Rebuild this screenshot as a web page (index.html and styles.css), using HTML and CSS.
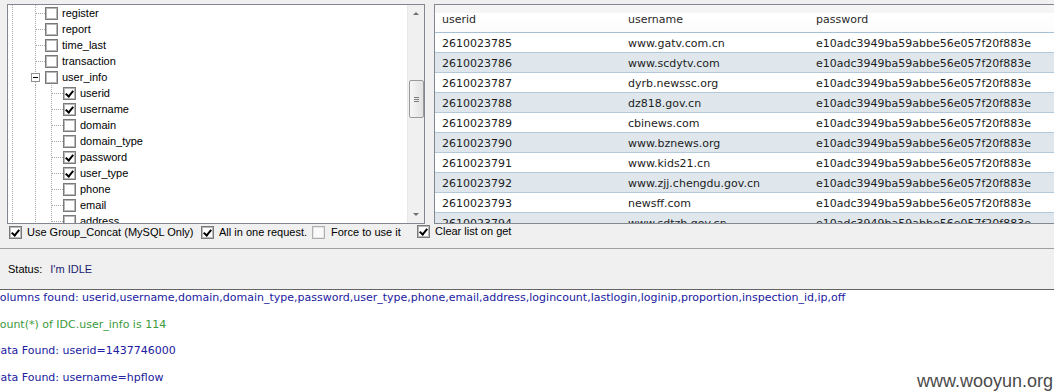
FILE: index.html
```html
<!DOCTYPE html>
<html lang="en">
<head>
    <meta charset="UTF-8">
    <title>Dump - user_info</title>
    <link rel="stylesheet" href="styles.css">
</head>
<body>
    <div class="top">
        <div class="tree">
            <div class="tree-body">
                <div class="node lvl2"><span class="cb"></span><span class="lbl">register</span></div>
                <div class="node lvl2"><span class="cb"></span><span class="lbl">report</span></div>
                <div class="node lvl2"><span class="cb"></span><span class="lbl">time_last</span></div>
                <div class="node lvl2"><span class="cb"></span><span class="lbl">transaction</span></div>
                <div class="node lvl1"><span class="toggle"></span><span class="cb"></span><span class="lbl">user_info</span></div>
                <div class="node lvl3"><span class="cb on"></span><span class="lbl">userid</span></div>
                <div class="node lvl3"><span class="cb on"></span><span class="lbl">username</span></div>
                <div class="node lvl3"><span class="cb"></span><span class="lbl">domain</span></div>
                <div class="node lvl3"><span class="cb"></span><span class="lbl">domain_type</span></div>
                <div class="node lvl3"><span class="cb on"></span><span class="lbl">password</span></div>
                <div class="node lvl3"><span class="cb on"></span><span class="lbl">user_type</span></div>
                <div class="node lvl3"><span class="cb"></span><span class="lbl">phone</span></div>
                <div class="node lvl3"><span class="cb"></span><span class="lbl">email</span></div>
                <div class="node lvl3"><span class="cb"></span><span class="lbl">address</span></div>
            </div>
            <div class="vscroll">
                <div class="arrow up"></div>
                <div class="thumb"><span></span><span></span><span></span></div>
                <div class="arrow down"></div>
            </div>
        </div>
        <div class="grid">
            <table>
                <thead>
                    <tr><th class="c1">userid</th><th class="c2">username</th><th>password</th></tr>
                </thead>
                <tbody>
                    <tr><td>2610023785</td><td>www.gatv.com.cn</td><td>e10adc3949ba59abbe56e057f20f883e</td></tr>
                    <tr><td>2610023786</td><td>www.scdytv.com</td><td>e10adc3949ba59abbe56e057f20f883e</td></tr>
                    <tr><td>2610023787</td><td>dyrb.newssc.org</td><td>e10adc3949ba59abbe56e057f20f883e</td></tr>
                    <tr><td>2610023788</td><td>dz818.gov.cn</td><td>e10adc3949ba59abbe56e057f20f883e</td></tr>
                    <tr><td>2610023789</td><td>cbinews.com</td><td>e10adc3949ba59abbe56e057f20f883e</td></tr>
                    <tr><td>2610023790</td><td>www.bznews.org</td><td>e10adc3949ba59abbe56e057f20f883e</td></tr>
                    <tr><td>2610023791</td><td>www.kids21.cn</td><td>e10adc3949ba59abbe56e057f20f883e</td></tr>
                    <tr><td>2610023792</td><td>www.zjj.chengdu.gov.cn</td><td>e10adc3949ba59abbe56e057f20f883e</td></tr>
                    <tr><td>2610023793</td><td>newsff.com</td><td>e10adc3949ba59abbe56e057f20f883e</td></tr>
                    <tr><td>2610023794</td><td>www.sdtzb.gov.cn</td><td>e10adc3949ba59abbe56e057f20f883e</td></tr>
                </tbody>
            </table>
        </div>
    </div>

    <div class="options">
        <label class="opt o1"><span class="cb on"></span>Use Group_Concat (MySQL Only)</label>
        <label class="opt o2"><span class="cb on"></span>All in one request.</label>
        <label class="opt o3"><span class="cb off"></span>Force to use it</label>
        <label class="opt o4"><span class="cb on"></span>Clear list on get</label>
    </div>

    <div class="status">Status: <span class="state">I'm IDLE</span></div>

    <div class="log">
        <p class="info">Columns found: userid,username,domain,domain_type,password,user_type,phone,email,address,logincount,lastlogin,loginip,proportion,inspection_id,ip,off</p>
        <p class="ok">Count(*) of IDC.user_info is 114</p>
        <p class="info">Data Found: userid=1437746000</p>
        <p class="info">Data Found: username=hpflow</p>
        <div class="mark">www.wooyun.org</div>
    </div>
</body>
</html>
```

FILE: styles.css
```css
body, html {
    margin: 0;
    padding: 0;
    height: 100%;
    overflow: hidden;
    background-color: #f0f0f0;
    font-family: 'Liberation Sans', Arial, sans-serif;
    font-size: 11px;
    color: #000;
}
.top {
    display: flex;
    padding: 4px 0 0 7px;
    height: 220px;
}

/* tree of tables / columns */
.tree {
    width: 416px;
    height: 218px;
    border: 1px solid #828790;
    background: #fff;
    display: flex;
    flex-shrink: 0;
}
.tree-body {
    flex: 1;
    overflow: hidden;
}
.node {
    height: 16px;
    display: flex;
    align-items: center;
    background-repeat: no-repeat;
}
.lvl1 {
    padding-left: 23px;
    background-image:
        repeating-linear-gradient(to bottom, #a8a8a8 0 1px, transparent 1px 2px),
        repeating-linear-gradient(to bottom, #a8a8a8 0 1px, transparent 1px 2px),
        repeating-linear-gradient(to bottom, #a8a8a8 0 1px, transparent 1px 2px);
    background-size: 1px 16px, 1px 4px, 1px 4px;
    background-position: 4px 0, 27px 0, 27px 13px;
}
.lvl2 {
    padding-left: 37px;
    background-image:
        repeating-linear-gradient(to bottom, #a8a8a8 0 1px, transparent 1px 2px),
        repeating-linear-gradient(to bottom, #a8a8a8 0 1px, transparent 1px 2px),
        repeating-linear-gradient(to right, #a8a8a8 0 1px, transparent 1px 2px);
    background-size: 1px 16px, 1px 16px, 9px 1px;
    background-position: 4px 0, 27px 0, 28px 8px;
}
.lvl3 {
    padding-left: 55px;
    background-image:
        repeating-linear-gradient(to bottom, #a8a8a8 0 1px, transparent 1px 2px),
        repeating-linear-gradient(to bottom, #a8a8a8 0 1px, transparent 1px 2px),
        repeating-linear-gradient(to bottom, #a8a8a8 0 1px, transparent 1px 2px),
        repeating-linear-gradient(to right, #a8a8a8 0 1px, transparent 1px 2px);
    background-size: 1px 16px, 1px 16px, 1px 16px, 11px 1px;
    background-position: 4px 0, 27px 0, 43px 0, 44px 8px;
}
.toggle {
    width: 7px;
    height: 7px;
    border: 1px solid #919191;
    background: #fff;
    position: relative;
    margin-right: 5px;
}
.toggle::after {
    content: '';
    position: absolute;
    left: 1px;
    top: 3px;
    width: 5px;
    height: 1px;
    background: #000;
}
.lbl {
    margin-left: 4px;
}

/* checkbox */
.cb {
    width: 11px;
    height: 11px;
    border: 1px solid #7a7a7a;
    box-shadow: inset 0 0 0 1px #b9b9b9;
    background: #fff;
    position: relative;
    flex-shrink: 0;
}
.cb.on::after {
    content: '';
    position: absolute;
    left: 3px;
    top: 1px;
    width: 3px;
    height: 6px;
    border-right: 2px solid #000;
    border-bottom: 2px solid #000;
    transform: rotate(40deg);
}
.cb.off {
    border-color: #b0b0b0;
    box-shadow: inset 0 0 0 1px #e6e6e6;
    background: #fafafa;
}

/* scrollbar */
.vscroll {
    width: 16px;
    background: #f0f0f0;
    border-left: 1px solid #e8e8e8;
    display: flex;
    flex-direction: column;
    align-items: center;
}
.arrow {
    height: 17px;
    width: 16px;
    position: relative;
}
.arrow::after {
    content: '';
    position: absolute;
    left: 5px;
    border-left: 3px solid transparent;
    border-right: 3px solid transparent;
}
.arrow.up::after {
    top: 7px;
    border-bottom: 3px solid #707070;
}
.arrow.down {
    margin-top: auto;
}
.arrow.down::after {
    top: 7px;
    border-top: 3px solid #707070;
}
.thumb {
    margin-top: 58px;
    width: 13px;
    height: 36px;
    border: 1px solid #9a9a9a;
    border-radius: 2px;
    background: linear-gradient(to right, #f6f6f6, #e2e2e2);
    display: flex;
    flex-direction: column;
    justify-content: center;
    align-items: center;
    gap: 1px;
}
.thumb span {
    width: 5px;
    height: 1px;
    background: #7d7d7d;
}

/* result grid */
.grid {
    margin-left: 9px;
    width: 640px;
    height: 218px;
    border: 1px solid #828790;
    border-right: none;
    background: #fff;
    overflow: hidden;
    flex-shrink: 0;
}
.grid table {
    border-collapse: collapse;
    width: 640px;
    font-family: 'DejaVu Sans', Verdana, sans-serif;
    font-size: 11px;
    color: #1c1c1c;
}
.grid th {
    height: 26px;
    padding: 1px 0 0 7px;
    text-align: left;
    font-weight: normal;
    color: #2a2a2a;
    background: linear-gradient(to bottom, #f5f5f5 0, #f5f5f5 30%, #fff 31%, #fcfcfc 100%);
    border-bottom: 1px solid #a7bfd3;
}
.grid th.c1 { width: 179px; }
.grid th.c2 { width: 181px; }
.grid td {
    height: 18px;
    padding: 1px 0 0 7px;
    border-bottom: 1px solid #b3c8d9;
    white-space: nowrap;
}
.grid tbody tr:nth-child(even) td {
    background: #dfe7ed;
}

/* options row */
.options {
    display: flex;
    align-items: center;
    height: 17px;
    line-height: 13px;
    padding-left: 9px;
}
.opt {
    display: flex;
    align-items: center;
    gap: 5px;
}
.o1 { width: 192px; }
.o2 { width: 111px; }
.o3 { width: 105px; gap: 6px; }
.o4 { margin-top: -2px; }

.status {
    margin-top: 7px;
    border-top: 1px solid #a0a0a0;
    height: 40px;
    line-height: 40px;
    padding-left: 8px;
}
.state {
    margin-left: 5px;
    color: #1a1a6e;
}

/* log output */
.log {
    position: relative;
    border-top: 1px solid #646464;
    background: #fff;
    height: 110px;
    margin-left: -8px;
    font-family: 'DejaVu Sans', Verdana, sans-serif;
    font-size: 11px;
}
.log p {
    margin: 0 0 12.5px 0;
    height: 13px;
    line-height: 14px;
    padding-top: 1px;
    white-space: nowrap;
}
.log .info {
    color: #2020a0;
}
.log .ok {
    color: #3c9a3c;
}
.mark {
    position: absolute;
    right: 1px;
    top: 81px;
    font-family: 'Liberation Sans', Arial, sans-serif;
    font-size: 18px;
    color: #4a4a4a;
}
```
